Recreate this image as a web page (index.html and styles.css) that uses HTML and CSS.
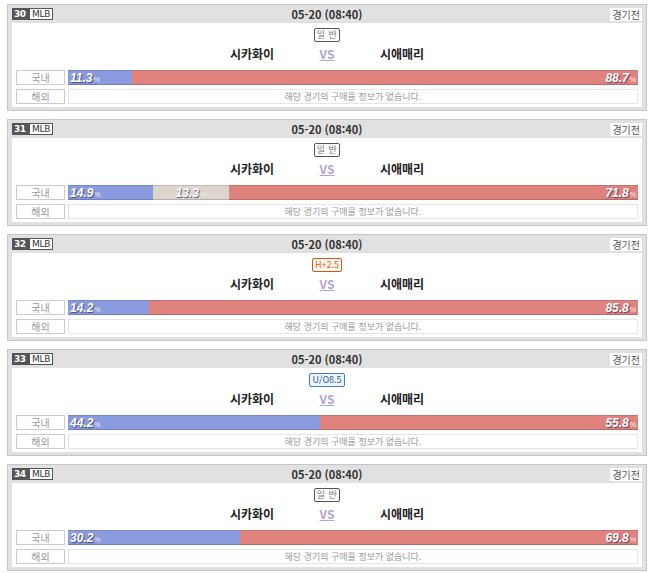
FILE: index.html
```html
<!DOCTYPE html>
<html lang="ko">
<head>
<meta charset="utf-8">
<link rel="stylesheet" href="styles.css">
</head>
<body>
<div class="list">

  <div class="match">
    <div class="head">
      <div class="league"><span class="num">30</span><span class="lg">MLB</span></div>
      <div class="date">05-20 (08:40)</div>
      <div class="status">경기전</div>
    </div>
    <div class="panel">
      <div class="type"><span class="tag tag-normal">일 반</span></div>
      <div class="teams">
        <span class="team">시카화이</span>
        <span class="vs">VS</span>
        <span class="team">시애매리</span>
      </div>
      <div class="row">
        <div class="label">국내</div>
        <div class="bar">
          <div class="seg home" style="width:11.3%"><span class="pct">11.3<small>%</small></span></div>
          <div class="seg away" style="width:88.7%"><span class="pct">88.7<small>%</small></span></div>
        </div>
      </div>
      <div class="row">
        <div class="label">해외</div>
        <div class="empty">해당 경기의 구매율 정보가 없습니다.</div>
      </div>
    </div>
  </div>

  <div class="match">
    <div class="head">
      <div class="league"><span class="num">31</span><span class="lg">MLB</span></div>
      <div class="date">05-20 (08:40)</div>
      <div class="status">경기전</div>
    </div>
    <div class="panel">
      <div class="type"><span class="tag tag-normal">일 반</span></div>
      <div class="teams">
        <span class="team">시카화이</span>
        <span class="vs">VS</span>
        <span class="team">시애매리</span>
      </div>
      <div class="row">
        <div class="label">국내</div>
        <div class="bar">
          <div class="seg home" style="width:14.9%"><span class="pct">14.9<small>%</small></span></div>
          <div class="seg draw" style="width:13.3%"><span class="pct">13.3<small>%</small></span></div>
          <div class="seg away" style="width:71.8%"><span class="pct">71.8<small>%</small></span></div>
        </div>
      </div>
      <div class="row">
        <div class="label">해외</div>
        <div class="empty">해당 경기의 구매율 정보가 없습니다.</div>
      </div>
    </div>
  </div>

  <div class="match">
    <div class="head">
      <div class="league"><span class="num">32</span><span class="lg">MLB</span></div>
      <div class="date">05-20 (08:40)</div>
      <div class="status">경기전</div>
    </div>
    <div class="panel">
      <div class="type"><span class="tag tag-handicap">H+2.5</span></div>
      <div class="teams">
        <span class="team">시카화이</span>
        <span class="vs">VS</span>
        <span class="team">시애매리</span>
      </div>
      <div class="row">
        <div class="label">국내</div>
        <div class="bar">
          <div class="seg home" style="width:14.2%"><span class="pct">14.2<small>%</small></span></div>
          <div class="seg away" style="width:85.8%"><span class="pct">85.8<small>%</small></span></div>
        </div>
      </div>
      <div class="row">
        <div class="label">해외</div>
        <div class="empty">해당 경기의 구매율 정보가 없습니다.</div>
      </div>
    </div>
  </div>

  <div class="match">
    <div class="head">
      <div class="league"><span class="num">33</span><span class="lg">MLB</span></div>
      <div class="date">05-20 (08:40)</div>
      <div class="status">경기전</div>
    </div>
    <div class="panel">
      <div class="type"><span class="tag tag-ou">U/O8.5</span></div>
      <div class="teams">
        <span class="team">시카화이</span>
        <span class="vs">VS</span>
        <span class="team">시애매리</span>
      </div>
      <div class="row">
        <div class="label">국내</div>
        <div class="bar">
          <div class="seg home" style="width:44.2%"><span class="pct">44.2<small>%</small></span></div>
          <div class="seg away" style="width:55.8%"><span class="pct">55.8<small>%</small></span></div>
        </div>
      </div>
      <div class="row">
        <div class="label">해외</div>
        <div class="empty">해당 경기의 구매율 정보가 없습니다.</div>
      </div>
    </div>
  </div>

  <div class="match">
    <div class="head">
      <div class="league"><span class="num">34</span><span class="lg">MLB</span></div>
      <div class="date">05-20 (08:40)</div>
      <div class="status">경기전</div>
    </div>
    <div class="panel">
      <div class="type"><span class="tag tag-normal">일 반</span></div>
      <div class="teams">
        <span class="team">시카화이</span>
        <span class="vs">VS</span>
        <span class="team">시애매리</span>
      </div>
      <div class="row">
        <div class="label">국내</div>
        <div class="bar">
          <div class="seg home" style="width:30.2%"><span class="pct">30.2<small>%</small></span></div>
          <div class="seg away" style="width:69.8%"><span class="pct">69.8<small>%</small></span></div>
        </div>
      </div>
      <div class="row">
        <div class="label">해외</div>
        <div class="empty">해당 경기의 구매율 정보가 없습니다.</div>
      </div>
    </div>
  </div>

</div>
</body>
</html>
```

FILE: styles.css
```css
* { box-sizing: border-box; }

body {
  margin: 0;
  background: #fff;
  font-family: "Noto Sans CJK KR", "Noto Sans", sans-serif;
  color: #333;
}

.list {
  display: flex;
  flex-direction: column;
  gap: 8px;
  padding: 4px 0 0 7px;
}

.match {
  width: 640px;
  border: 1px solid #c6c6c6;
  background: #e1e1e1;
  padding: 0 4px 3px 4px;
}

.head {
  height: 18px;
  display: grid;
  grid-template-columns: 1fr auto 1fr;
  align-items: center;
}

.league {
  display: flex;
  height: 12px;
  font-family: "DejaVu Sans", sans-serif;
  font-size: 9px;
  line-height: 12px;
}
.league .num {
  background: #555;
  color: #fff;
  font-weight: bold;
  padding: 0 2px 0 2px;
  width: 18px;
  letter-spacing: -0.5px;
}
.league .lg {
  background: #fff;
  color: #333;
  border: 1px solid #555;
  border-left: none;
  line-height: 10px;
  padding: 0 2px;
  letter-spacing: -0.3px;
}

.date {
  font-size: 11px;
  font-weight: bold;
  color: #333;
  line-height: 18px;
}

.status {
  justify-self: end;
  background: #fff;
  font-size: 10px;
  color: #555;
  height: 13px;
  line-height: 13px;
  padding: 0 2px;
  margin-top: 1px;
}

.panel {
  background: #fff;
  height: 84px;
  padding: 5px 4px 3px 4px;
  display: flex;
  flex-direction: column;
}

.type {
  display: flex;
  justify-content: center;
  height: 14px;
}
.tag {
  display: inline-block;
  height: 14px;
  line-height: 12px;
  font-size: 9px;
  padding: 0 2px;
  border: 1px solid #555;
  border-radius: 2px;
  color: #777;
  background: #fff;
}
.tag-normal { padding: 0 2px; letter-spacing: 0.5px; }
.tag-handicap {
  border-color: #c95a1c;
  color: #e05a2a;
  background: #fff8f0;
}
.tag-ou {
  border-color: #3b7fd0;
  color: #2c5d9c;
  background: #eef5ff;
}

.teams {
  height: 22px;
  display: flex;
  justify-content: center;
  align-items: center;
  margin-bottom: 6px;
}
.team {
  width: 100px;
  text-align: center;
  font-size: 12px;
  font-weight: bold;
  color: #222;
}
.vs {
  width: 50px;
  text-align: center;
  font-size: 12px;
  font-weight: bold;
  color: #b3a2d8;
  text-decoration: underline;
}

.row {
  display: flex;
  gap: 3px;
  height: 15px;
}
.row + .row { margin-top: 4px; }

.label {
  width: 49px;
  border: 1px solid #cbcbcb;
  background: #fff;
  color: #999;
  font-size: 10px;
  line-height: 13px;
  text-align: center;
}

.bar {
  width: 570px;
  display: flex;
  height: 15px;
}
.seg {
  height: 15px;
  display: flex;
  align-items: center;
  overflow: hidden;
  box-shadow: inset 0 1px 0 rgba(0,0,0,0.12), inset 0 -1px 0 rgba(0,0,0,0.18);
}
.seg.home { background: #8a9cdf; justify-content: flex-start; padding-left: 2px; }
.seg.draw { background: #ddd5d0; justify-content: center; }
.seg.away { background: #e0837f; justify-content: flex-end; padding-right: 2px; }

.pct {
  font-family: "Liberation Sans", sans-serif;
  font-style: italic;
  font-weight: bold;
  font-size: 12px;
  color: #fff;
  text-shadow: 1px 1px 1px rgba(40,40,80,0.7);
  white-space: nowrap;
}
.pct small {
  font-size: 7px;
  font-style: normal;
  font-weight: normal;
  color: #eee;
  margin-left: 1px;
  text-shadow: none;
}

.empty {
  width: 570px;
  border: 1px solid #e5e5e5;
  color: #999;
  font-size: 9px;
  line-height: 13px;
  text-align: center;
}
```
